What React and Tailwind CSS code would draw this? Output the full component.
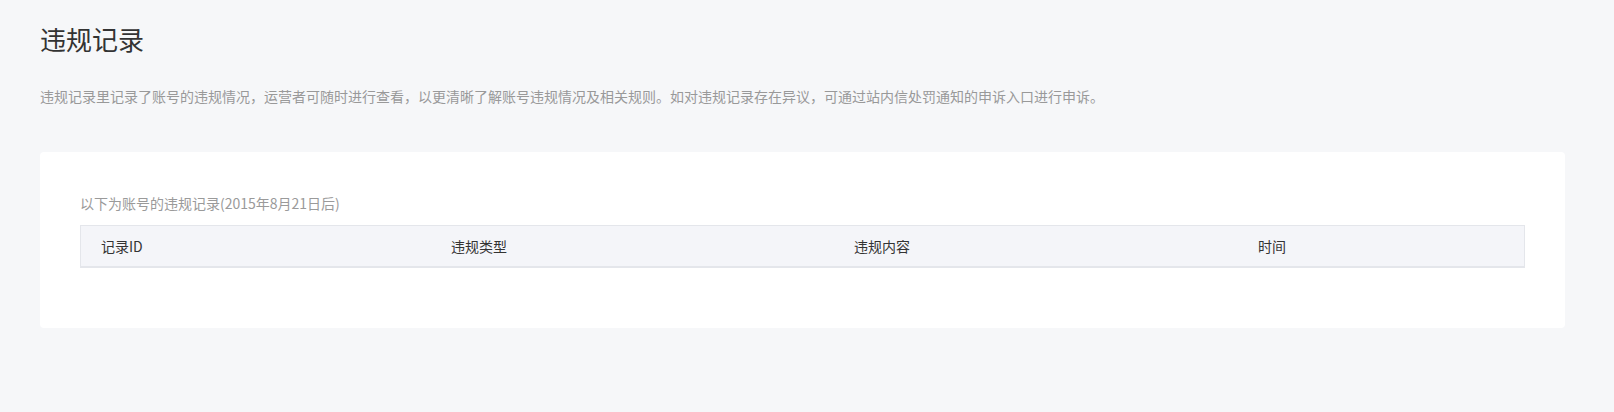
export default function App() {
  const font = { fontFamily: '"Noto Sans CJK SC", "Noto Sans", sans-serif' };
  return (
    <div
      className="min-h-[412px] w-full bg-[#f6f7f9] pl-10 pr-[49px] pt-[21px] pb-10"
      style={font}
    >
      <h1 className="text-[26px] leading-[36px] text-[#333333] font-normal">违规记录</h1>
      <p className="mt-[28px] text-[14px] leading-[22px] text-[#999999]">
        违规记录里记录了账号的违规情况，运营者可随时进行查看，以更清晰了解账号违规情况及相关规则。如对违规记录存在异议，可通过站内信处罚通知的申诉入口进行申诉。
      </p>
      <div className="mt-[45px] rounded-[4px] bg-white px-10 pt-10 pb-[60px]">
        <div className="text-[14px] leading-[22px] text-[#9a9a9a]">
          以下为账号的违规记录(2015年8月21日后)
        </div>
        <div className="mt-[11px] grid grid-cols-[350px_403px_404px_1fr] border border-b-2 border-[#e4e6eb] bg-[#f4f5f9] text-[14px] text-[#333333]">
          <div className="flex h-[40px] items-center pl-5">记录ID</div>
          <div className="flex h-[40px] items-center pl-5">违规类型</div>
          <div className="flex h-[40px] items-center pl-5">违规内容</div>
          <div className="flex h-[40px] items-center pl-5">时间</div>
        </div>
      </div>
    </div>
  );
}
